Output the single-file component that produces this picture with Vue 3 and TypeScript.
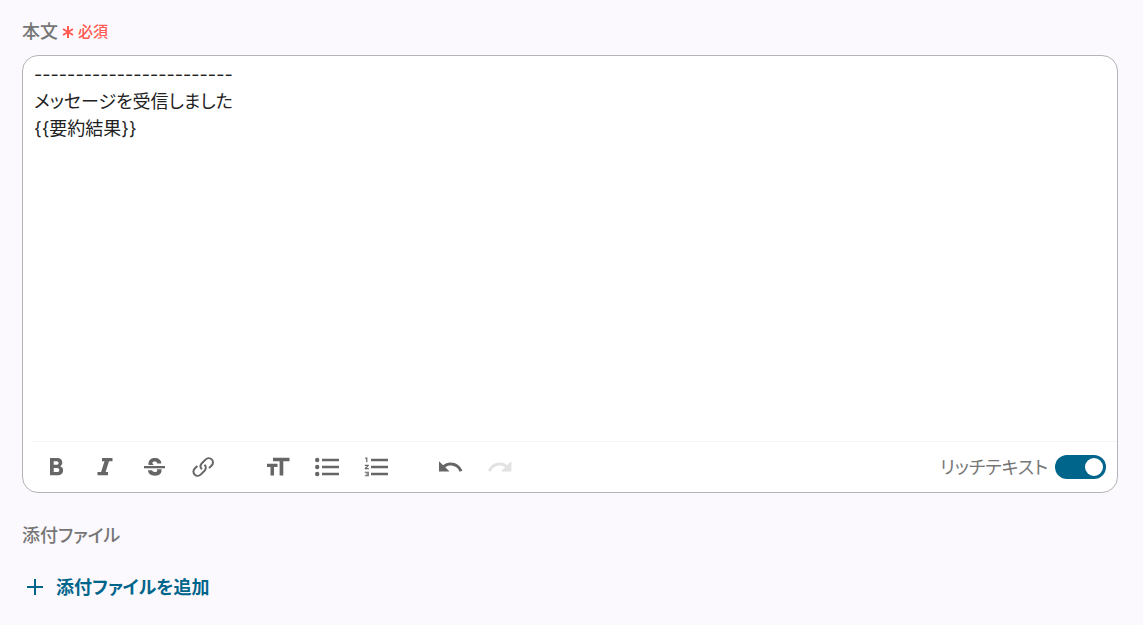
<script setup lang="ts">
import { ref } from 'vue'

interface Tool {
  name: string
  label: string
  paths: string[]
  stroked?: boolean
  gap?: boolean
  disabled?: boolean
}

const body = ref('------------------------\nメッセージを受信しました\n{{要約結果}}')
const rich = ref(true)

const tools: Tool[] = [
  {
    name: 'bold',
    label: '太字',
    paths: ['M8 5h7.200c3.200 0 5.100 1.800 5.100 4.600 0 1.700-.8 3-2.100 3.700 1.900.7 2.900 2.100 2.900 4.200 0 3-2.200 4.800-5.500 4.800H8zM11.700 8.200v3.600h3c1.200 0 1.900-.7 1.900-1.800s-.7-1.800-1.900-1.800zM11.700 15v4.100h3.400c1.500 0 2.200-.8 2.200-2.050s-.7-2.050-2.200-2.050z'],
  },
  {
    name: 'italic',
    label: '斜体',
    paths: ['M11 5h10.500v3.300H18l-3.400 10.700H17v3.300H6.500v-3.300h3.600l3.400-10.700H11z'],
  },
  {
    name: 'strike',
    label: '取り消し線',
    paths: [
      'M4 13h21v2.300H4z',
      'M8.600 12c-.5-4.300 1.800-7 6.200-7 3.900 0 6.300 1.900 6.600 5.400h-4.200c-.2-1.200-1-1.800-2.500-1.800s-2.300.5-2.300 1.500c0 .8.5 1.400 1.600 1.900zM8 17.300h4.200c.2 1.100 1.100 1.700 2.700 1.700 1.500 0 2.300-.5 2.300-1.500 0-.6-.2-.9-.6-1.200h4.900c.5 4-1.900 6.400-6.600 6.400-4.200 0-6.700-2-6.900-5.400z',
    ],
  },
  {
    name: 'link',
    label: 'リンク',
    stroked: true,
    paths: [
      'M12.900 16.200c-2-2-1.500-4.500.2-6.200l3.400-3.400c1.900-1.900 4.500-1.900 6.200-.2s1.700 4.300-.1 6.100l-2.600 2.600',
      'M15.500 11.800c2 2 1.500 4.500-.2 6.200l-3.400 3.400c-1.900 1.900-4.500 1.900-6.200.2s-1.700-4.300.1-6.100l2.600-2.600',
    ],
  },
  {
    name: 'size',
    label: '文字サイズ',
    gap: true,
    paths: ['M10 4.800H26.500v3.500H20.300V22.500H16.600V8.300H10zM4 10.700H14.500v3.300H11V22.500H7.500V14H4z'],
  },
  {
    name: 'bullets',
    label: '箇条書き',
    paths: [
      'M10 5.700h17V8.200H10zM10 12.700h17v2.500H10zM10 19.700h17v2.500H10z',
      'M3 7a2.200 2.200 0 1 0 4.400 0a2.200 2.200 0 1 0-4.400 0M3 14a2.200 2.200 0 1 0 4.400 0a2.200 2.200 0 1 0-4.400 0M3 21a2.200 2.200 0 1 0 4.400 0a2.200 2.200 0 1 0-4.400 0',
    ],
  },
  {
    name: 'numbers',
    label: '番号付きリスト',
    paths: ['M10 5.700h17V8.200H10zM10 12.700h17v2.500H10zM10 19.700h17v2.500H10z', 'M4.200 4.500h2.200v4.700H5.200V5.700h-1zM3.800 11.700h4v1.100l-2.200 2.200h2.200v1.200h-4v-1.100L6 12.900H3.800zM3.800 18.700h4v4.600h-4v-1.100h2.800v-.7H4.800v-1h1.800v-.7H3.800z'],
  },
  {
    name: 'undo',
    label: '元に戻す',
    gap: true,
    paths: ['M4 8.200l4.200 4c2-1.700 4.500-2.700 7.200-2.700 5.600 0 10.200 3.300 12 8.300l-2.800 1c-1.400-4-5-6.200-9.200-6.200-1.900 0-3.700.6-5.100 1.700L14.500 18.500H4z'],
  },
  {
    name: 'redo',
    label: 'やり直す',
    disabled: true,
    paths: ['M27.400 8.200l-4.200 4c-2-1.700-4.500-2.700-7.200-2.700-5.600 0-10.200 3.300-12 8.300l2.800 1c1.400-4 5-6.200 9.200-6.200 1.900 0 3.700.6 5.100 1.700L16.900 18.500H27.400z'],
  },
]
</script>

<template>
  <main class="form">
    <div class="heading">
      <label for="body">本文</label>
      <span class="required">
        <svg class="star" viewBox="0 0 12 12" aria-hidden="true"><path d="M6 0v12M1 3l10 6M11 3L1 9" /></svg>
        必須
      </span>
    </div>
    <section class="editor">
      <textarea id="body" v-model="body" spellcheck="false"></textarea>
      <div class="toolbar">
        <button
          v-for="t in tools"
          :key="t.name"
          type="button"
          class="tool"
          :class="{ gap: t.gap, stroked: t.stroked }"
          :aria-label="t.label"
          :disabled="t.disabled"
        >
          <svg viewBox="0 0 28 28" aria-hidden="true"><path v-for="p in t.paths" :key="p" :d="p" fill-rule="evenodd" /></svg>
        </button>
        <label class="rich">
          <span>リッチテキスト</span>
          <input v-model="rich" type="checkbox" role="switch" />
        </label>
      </div>
    </section>
    <h2>添付ファイル</h2>
    <button type="button" class="add">
      <svg viewBox="0 0 18 18" aria-hidden="true"><path d="M9 1v16M1 9h16" /></svg>
      添付ファイルを追加
    </button>
  </main>
</template>

<style>
body {
  background: #fbf9fd;
}
</style>

<style scoped>
.form {
  padding: 17px 25px 0 22px;
  font: 18px/27px "Noto Sans CJK JP", sans-serif;
  font-feature-settings: "palt";
  color: #767676;
}
.heading {
  display: flex;
  align-items: center;
  gap: 4px;
  font-weight: 500;
}
.required {
  display: flex;
  align-items: center;
  gap: 4px;
  font-size: 15px;
  color: #ff5a52;
}
.star {
  width: 12px;
  height: 12px;
  margin-top: 2px;
  fill: none;
  stroke: currentColor;
  stroke-width: 2;
}
.editor {
  display: flex;
  flex-direction: column;
  margin-top: 11px;
  border: 1px solid #b4b4b4;
  border-radius: 16px;
  background: #fff;
}
textarea {
  display: block;
  box-sizing: border-box;
  width: 100%;
  height: 385px;
  padding: 5px 11px;
  border: 0;
  border-radius: 16px;
  outline: 0;
  resize: none;
  background: transparent;
  color: #222;
  font: inherit;
  font-family: Inter, "Noto Sans CJK JP", sans-serif;
  font-feature-settings: inherit;
}
.toolbar {
  display: flex;
  align-items: center;
  gap: 21px;
  height: 50px;
  margin-left: 8px;
  padding: 0 11px;
  border-top: 1px solid #f4f4f4;
}
.tool {
  width: 28px;
  height: 28px;
  padding: 0;
  border: 0;
  background: none;
  color: #666;
}
.tool:disabled {
  color: #e2e2e2;
}
.gap {
  margin-left: 25px;
}
.tool svg {
  display: block;
  width: 28px;
  height: 28px;
  fill: currentColor;
}
.stroked svg {
  fill: none;
  stroke: currentColor;
  stroke-width: 2;
}
.rich {
  display: flex;
  align-items: center;
  gap: 7px;
  margin-left: auto;
}
.rich span {
  padding-bottom: 2px;
}
.rich input {
  display: flex;
  align-items: center;
  justify-content: flex-end;
  appearance: none;
  box-sizing: border-box;
  width: 51px;
  height: 24px;
  margin: 0;
  padding: 3px;
  border-radius: 12px;
  background: #00658b;
}
.rich input::before {
  content: "";
  width: 18px;
  height: 18px;
  border-radius: 50%;
  background: #fff;
}
.rich input:not(:checked) {
  justify-content: flex-start;
  background: #999;
}
h2 {
  margin: 28px 0 0;
  font: inherit;
  font-weight: 500;
}
.add {
  display: flex;
  align-items: center;
  gap: 12px;
  margin-top: 25px;
  padding: 0 4px;
  border: 0;
  background: none;
  color: #00658b;
  font: inherit;
  font-feature-settings: inherit;
  font-weight: 700;
}
.add svg {
  width: 18px;
  height: 18px;
  fill: none;
  stroke: currentColor;
  stroke-width: 2;
}
</style>
